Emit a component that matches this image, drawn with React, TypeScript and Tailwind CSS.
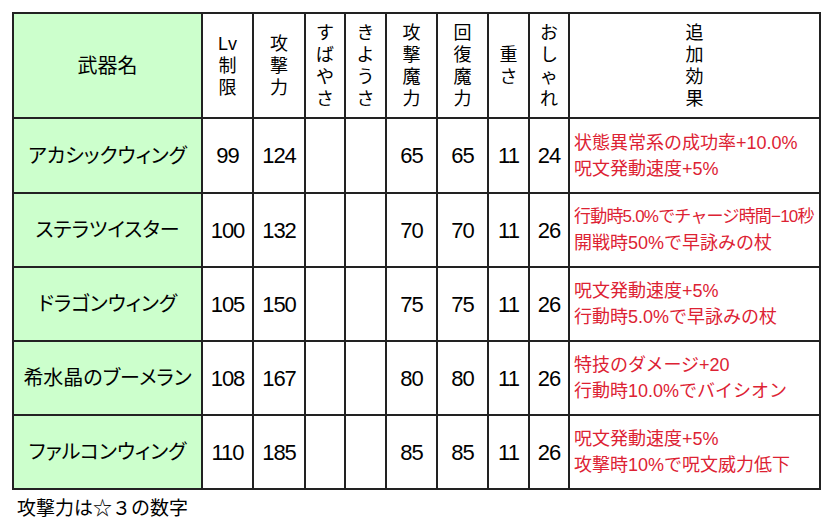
const HEADERS: { lines: string[]; w: number }[] = [
  { lines: ['Lv', '制', '限'], w: 51 },
  { lines: ['攻', '撃', '力'], w: 52 },
  { lines: ['す', 'ば', 'や', 'さ'], w: 40 },
  { lines: ['き', 'よ', 'う', 'さ'], w: 41 },
  { lines: ['攻', '撃', '魔', '力'], w: 51 },
  { lines: ['回', '復', '魔', '力'], w: 51 },
  { lines: ['重', 'さ'], w: 41 },
  { lines: ['お', 'し', 'ゃ', 'れ'], w: 40 },
  { lines: ['追', '加', '効', '果'], w: 251 },
]

const ROWS = [
  {
    name: 'アカシックウィング',
    lv: '99', atk: '124', spd: '', dex: '', mag: '65', heal: '65', wt: '11', style: '24',
    effects: ['状態異常系の成功率+10.0%', '呪文発動速度+5%'],
    h: 75,
  },
  {
    name: 'ステラツイスター',
    lv: '100', atk: '132', spd: '', dex: '', mag: '70', heal: '70', wt: '11', style: '26',
    effects: ['行動時5.0%でチャージ時間−10秒', '開戦時50%で早詠みの杖'],
    small: true,
    h: 74,
  },
  {
    name: 'ドラゴンウィング',
    lv: '105', atk: '150', spd: '', dex: '', mag: '75', heal: '75', wt: '11', style: '26',
    effects: ['呪文発動速度+5%', '行動時5.0%で早詠みの杖'],
    h: 74,
  },
  {
    name: '希水晶のブーメラン',
    lv: '108', atk: '167', spd: '', dex: '', mag: '80', heal: '80', wt: '11', style: '26',
    effects: ['特技のダメージ+20', '行動時10.0%でバイシオン'],
    h: 74,
  },
  {
    name: 'ファルコンウィング',
    lv: '110', atk: '185', spd: '', dex: '', mag: '85', heal: '85', wt: '11', style: '26',
    effects: ['呪文発動速度+5%', '攻撃時10%で呪文威力低下'],
    h: 74,
  },
]

const cell = 'border-2 border-[#222] text-center align-middle p-0'
const num = `${cell} text-[22px] tracking-[-1px]`

export default function App() {
  return (
    <div
      className="w-[833px] h-[528px] bg-white text-black pt-[12px] pl-[12px]"
      style={{ fontFamily: '"Liberation Sans", "Noto Sans CJK JP", sans-serif' }}
    >
      <table className="table-fixed border-collapse w-[809px] border-2 border-[#222]">
        <colgroup>
          <col className="w-[189px]" />
          {HEADERS.map((h, i) => (
            <col key={i} style={{ width: h.w }} />
          ))}
        </colgroup>
        <thead>
          <tr className="h-[105px]">
            <th className={`${cell} bg-[#ccffcc] font-normal text-[20px]`}>武器名</th>
            {HEADERS.map((h, i) => (
              <th key={i} className={`${cell} font-normal text-[18px] leading-[22px]`}>
                {h.lines.map((l, j) => (
                  <div key={j}>{l}</div>
                ))}
              </th>
            ))}
          </tr>
        </thead>
        <tbody>
          {ROWS.map((r) => (
            <tr key={r.name} style={{ height: r.h }}>
              <td className={`${cell} bg-[#ccffcc] text-[20px] whitespace-nowrap [font-feature-settings:'palt']`}>
                {r.name}
              </td>
              <td className={num}>{r.lv}</td>
              <td className={num}>{r.atk}</td>
              <td className={num}>{r.spd}</td>
              <td className={num}>{r.dex}</td>
              <td className={num}>{r.mag}</td>
              <td className={num}>{r.heal}</td>
              <td className={num}>{r.wt}</td>
              <td className={num}>{r.style}</td>
              <td className={`${cell} text-left pl-[4px] text-[#dd2233] leading-[26px] whitespace-nowrap`}>
                {r.effects.map((e, j) => (
                  <div
                    key={j}
                    className={r.small && j === 0 ? 'text-[17px] tracking-[-0.8px]' : 'text-[18px]'}
                  >
                    {e}
                  </div>
                ))}
              </td>
            </tr>
          ))}
        </tbody>
      </table>
      <div className="mt-[7px] pl-[5px] text-[19px] leading-[24px]">攻撃力は☆３の数字</div>
    </div>
  )
}
